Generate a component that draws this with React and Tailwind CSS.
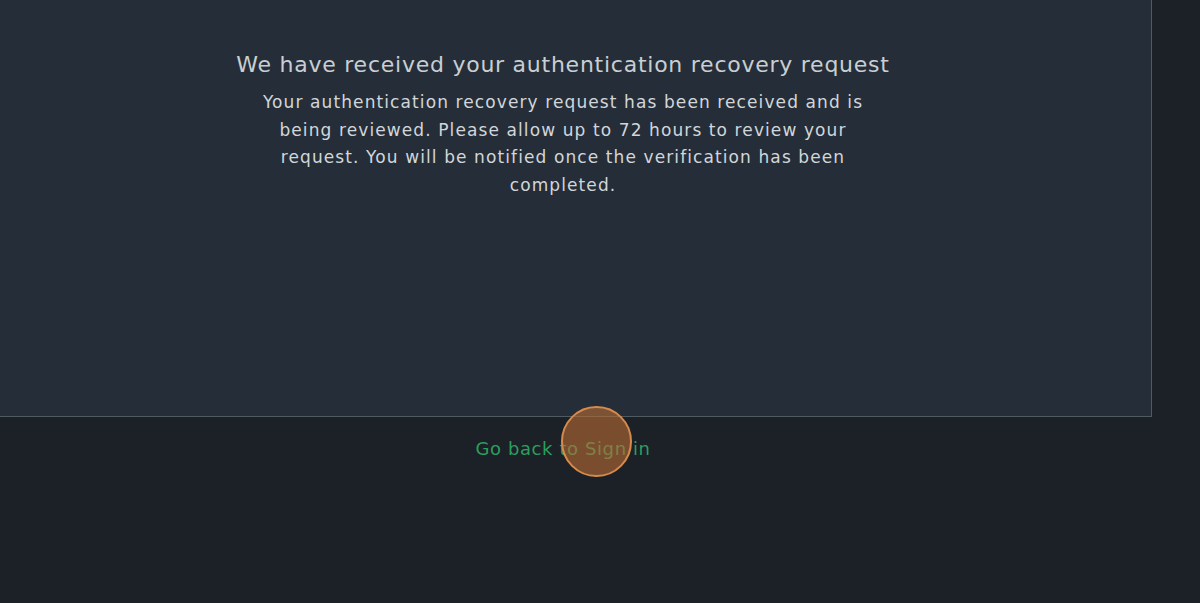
export default function App() {
  return (
    <div
      className="relative min-h-[603px] w-full overflow-hidden bg-[#1c2027]"
      style={{ fontFamily: '"DejaVu Sans", "Liberation Sans", sans-serif' }}
    >
      <section className="h-[417px] w-[1152px] border-r border-b border-[#4f5b60] bg-[#252e38]">
        <div className="flex w-[1126px] flex-col items-center pt-[50px] text-center">
          <h1 className="text-[22px] leading-[30px] tracking-[0.75px] text-[#c9ced3]">
            We have received your authentication recovery request
          </h1>
          <p className="mt-[9px] w-[615px] text-[17px] leading-[27.5px] tracking-[1.1px] text-[#d2d6da]">
            Your authentication recovery request has been received and is being reviewed. Please allow up to 72 hours to review your request. You will be notified once the verification has been completed.
          </p>
        </div>
      </section>
      <div className="flex w-[1126px] justify-center pt-[19px]">
        <a href="#" className="text-[18px] leading-[26px] tracking-[0.6px] text-[#2a9f5e]">
          Go back to Sign in
        </a>
      </div>
      <div className="pointer-events-none absolute left-[561px] top-[406px] h-[71px] w-[71px] rounded-full border-[2.5px] border-[#d68b4c] bg-[#b96c35]/60" />
    </div>
  );
}
